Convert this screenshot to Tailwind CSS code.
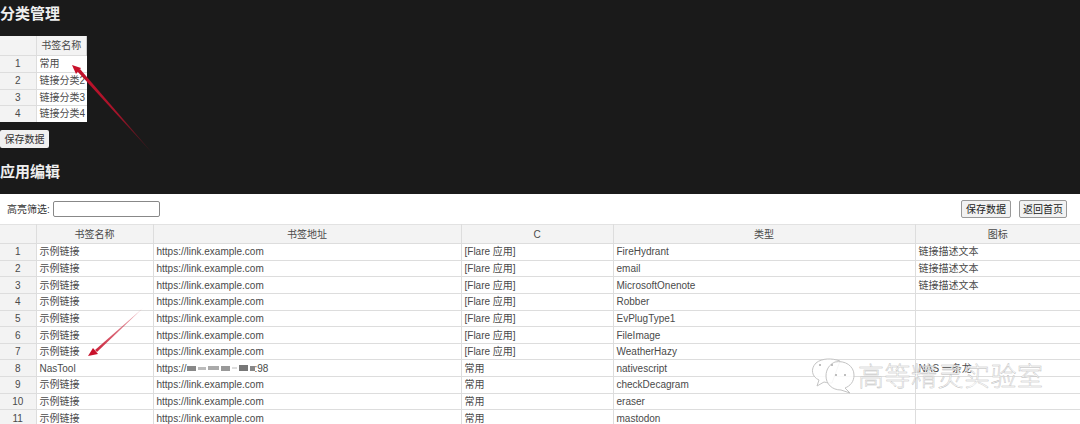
<!DOCTYPE html>
<html lang="zh">
<head>
  <meta charset="UTF-8">
  <title>分类管理</title>
  <script src="https://cdn.jsdelivr.net/npm/@tailwindcss/browser@4"></script>
</head>
<body class="relative h-[424px] w-[1080px] overflow-hidden bg-white font-['Liberation_Sans','Noto_Sans_CJK_SC',sans-serif] text-[10px] text-[#4a4a4a]">
  <section class="h-[194px] bg-[#1a1a1a] pt-[5px]">
    <h2 class="h-[17px] text-[15px] leading-[17px] font-bold text-[#eeeeee]">分类管理</h2>
    <table class="mt-[14px] w-[87px] table-fixed border-collapse bg-white">
      <colgroup><col class="w-[36px]"><col></colgroup>
      <tr class="h-[19px] bg-[#f3f3f3] text-center"><td class="border-r border-[#ddd]"></td><td class="border-r border-[#ccc]">书签名称</td></tr>
      <tr class="h-[17px] border-t border-[#ddd]"><td class="border-r border-[#ddd] bg-[#f3f3f3] text-center">1</td><td class="pl-[3px]">常用</td></tr>
      <tr class="h-[17px] border-t border-[#ddd]"><td class="border-r border-[#ddd] bg-[#f3f3f3] text-center">2</td><td class="overflow-hidden pl-[3px] whitespace-nowrap">链接分类2</td></tr>
      <tr class="h-[16px] border-t border-[#ddd]"><td class="border-r border-[#ddd] bg-[#f3f3f3] text-center">3</td><td class="overflow-hidden pl-[3px] whitespace-nowrap">链接分类3</td></tr>
      <tr class="h-[17px] border-t border-[#ddd]"><td class="border-r border-[#ddd] bg-[#f3f3f3] text-center">4</td><td class="overflow-hidden pl-[3px] whitespace-nowrap">链接分类4</td></tr>
    </table>
    <button class="mt-[8px] block h-[18px] w-[49px] rounded-[2px] bg-[#f0f0f0] text-center text-[#333]">保存数据</button>
    <h2 class="mt-[15px] h-[17px] text-[15px] leading-[17px] font-bold text-[#eeeeee]">应用编辑</h2>
  </section>

  <div class="flex h-[30px] items-center justify-between pr-[13px] pl-[7px]">
    <div class="flex items-center gap-[3px] text-[#333]">
      <span>高亮筛选:</span>
      <input class="h-[16px] w-[107px] rounded-[2px] border border-[#888] bg-white" type="text">
    </div>
    <div class="flex gap-[8px]">
      <button class="h-[18px] w-[50px] rounded-[2px] border border-[#999] bg-[#f2f2f2] text-[#222]">保存数据</button>
      <button class="h-[18px] w-[48px] rounded-[2px] border border-[#999] bg-[#f2f2f2] text-[#222]">返回首页</button>
    </div>
  </div>

  <table class="w-[1080px] table-fixed border-collapse">
    <colgroup>
      <col class="w-[36px]"><col class="w-[117px]"><col class="w-[308px]"><col class="w-[152px]"><col class="w-[302px]"><col class="w-[165px]">
    </colgroup>
    <thead>
      <tr class="h-[19px] border-t border-[#e2e2e2] bg-[#f3f3f3] text-center">
        <th class="border-r border-[#ddd] font-normal"></th>
        <th class="border-r border-[#ddd] font-normal">书签名称</th>
        <th class="border-r border-[#ddd] font-normal">书签地址</th>
        <th class="border-r border-[#ddd] font-normal">C</th>
        <th class="border-r border-[#ddd] font-normal">类型</th>
        <th class="font-normal">图标</th>
      </tr>
    </thead>
    <tbody class="[&>tr]:h-[16.65px] [&>tr]:border-t [&>tr]:border-[#ddd] [&_td]:border-r [&_td]:border-[#ddd] [&_td]:py-0 [&_td]:leading-[15px] [&_td]:whitespace-nowrap [&_td:first-child]:bg-[#f3f3f3] [&_td:first-child]:text-center [&_td:not(:first-child)]:pl-[3px]">
      <tr><td>1</td><td>示例链接</td><td>https://link.example.com</td><td>[Flare 应用]</td><td>FireHydrant</td><td>链接描述文本</td></tr>
      <tr><td>2</td><td>示例链接</td><td>https://link.example.com</td><td>[Flare 应用]</td><td>email</td><td>链接描述文本</td></tr>
      <tr><td>3</td><td>示例链接</td><td>https://link.example.com</td><td>[Flare 应用]</td><td>MicrosoftOnenote</td><td>链接描述文本</td></tr>
      <tr><td>4</td><td>示例链接</td><td>https://link.example.com</td><td>[Flare 应用]</td><td>Robber</td><td></td></tr>
      <tr><td>5</td><td>示例链接</td><td>https://link.example.com</td><td>[Flare 应用]</td><td>EvPlugType1</td><td></td></tr>
      <tr><td>6</td><td>示例链接</td><td>https://link.example.com</td><td>[Flare 应用]</td><td>FileImage</td><td></td></tr>
      <tr><td>7</td><td>示例链接</td><td>https://link.example.com</td><td>[Flare 应用]</td><td>WeatherHazy</td><td></td></tr>
      <tr>
        <td>8</td><td>NasTool</td>
        <td>
          <div class="flex items-center">
            <span>https://</span>
            <!-- blurred part of the address -->
            <span class="flex h-[8px] w-[68px] items-center gap-[2px] blur-[0.7px]">
              <span class="h-[5px] w-[10px] bg-[#888]"></span><span class="h-[3px] w-[8px] bg-[#bbb]"></span><span class="h-[4px] w-[11px] bg-[#aaa]"></span><span class="h-[5px] w-[9px] bg-[#999]"></span><span class="h-[2px] w-[5px] bg-[#ddd]"></span><span class="h-[6px] w-[9px] bg-[#777]"></span><span class="h-[5px] w-[5px] bg-[#888]"></span>
            </span>
            <span>:98</span>
          </div>
        </td>
        <td>常用</td><td>nativescript</td><td>NAS 一条龙</td>
      </tr>
      <tr><td>9</td><td>示例链接</td><td>https://link.example.com</td><td>常用</td><td>checkDecagram</td><td></td></tr>
      <tr><td>10</td><td>示例链接</td><td>https://link.example.com</td><td>常用</td><td>eraser</td><td></td></tr>
      <tr><td>11</td><td>示例链接</td><td>https://link.example.com</td><td>常用</td><td>mastodon</td><td></td></tr>
    </tbody>
  </table>

  <!-- red arrows drawn over the tables -->
  <svg class="pointer-events-none absolute top-0 left-0" width="1080" height="424" viewBox="0 0 1080 424">
    <defs>
      <linearGradient id="a1" x1="154" y1="155" x2="72" y2="65" gradientUnits="userSpaceOnUse"><stop offset="0" stop-color="#7a1020" stop-opacity="0.25"/><stop offset="0.45" stop-color="#a5142a"/><stop offset="1" stop-color="#c8102a"/></linearGradient>
      <linearGradient id="a2" x1="143" y1="308" x2="88" y2="356" gradientUnits="userSpaceOnUse"><stop offset="0" stop-color="#c4122a" stop-opacity="0.3"/><stop offset="1" stop-color="#c8102a"/></linearGradient>
    </defs>
    <path d="M154 155 L77 71 L80 69 Z" fill="url(#a1)"/>
    <path d="M72 65 L81 68 L76 74 Z" fill="#c8102a"/>
    <path d="M143 308 L95 350 L97 352 Z" fill="url(#a2)"/>
    <path d="M88 356 L93 348 L98 354 Z" fill="#c8102a"/>
    <!-- wechat bubbles of the watermark -->
    <g fill="#ffffff" fill-opacity="0.85" stroke="#c4c4c4" stroke-width="1">
      <path d="M840 361 C832 358 822 358 816 363 C810 369 812 377 819 380 L817 386 L824 382 C828 383 830 383 832 383 Z"/>
      <path d="M835 362 C845 360 854 366 854 375 C854 382 850 386 845 388 L850 393 L841 390 C832 390 826 384 826 376 C826 369 830 364 835 362 Z"/>
    </g>
    <g fill="#aaa"><circle cx="820" cy="365" r="1"/><circle cx="832" cy="365" r="1"/><circle cx="836" cy="375" r="1"/><circle cx="845" cy="375" r="1"/></g>
  </svg>

  <div class="absolute top-[362px] left-[858px] text-[26px] leading-[30px] font-light tracking-[0.5px] whitespace-nowrap text-white/80 [-webkit-text-stroke:0.4px_#b8b8b8]">高等精灵实验室</div>
</body>
</html>
